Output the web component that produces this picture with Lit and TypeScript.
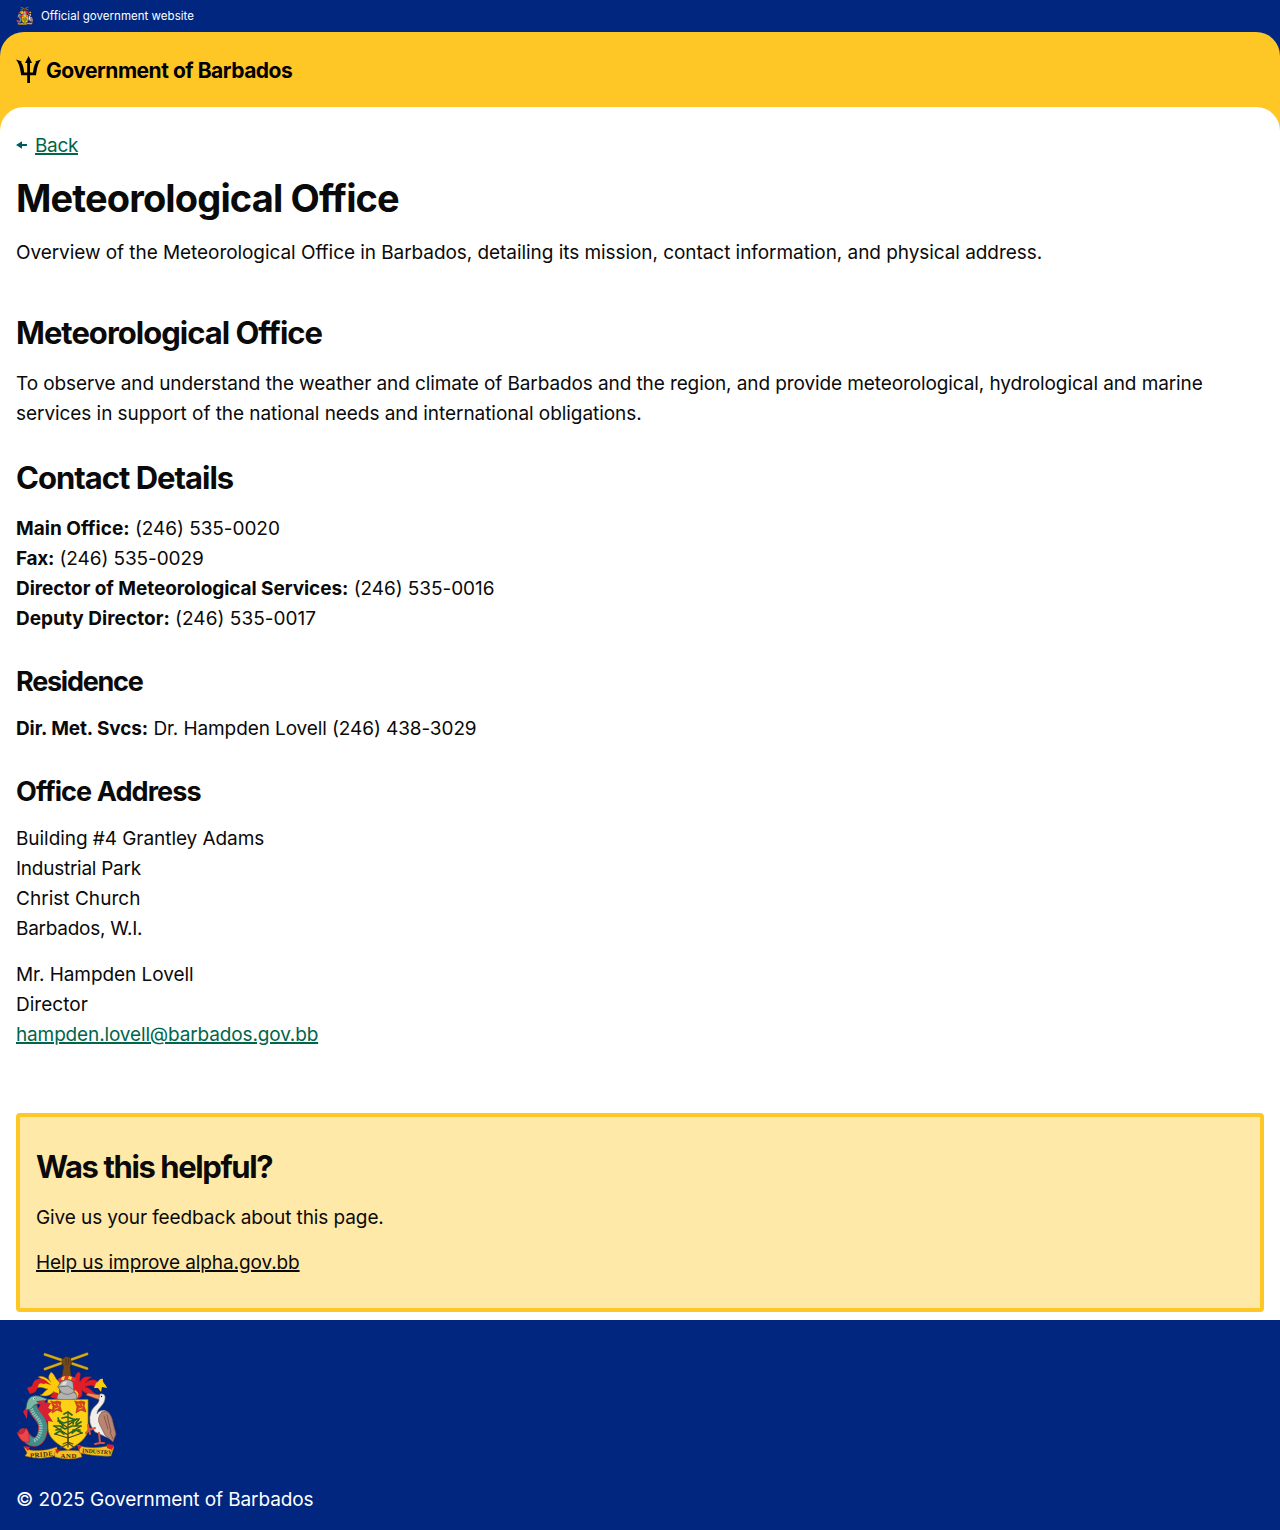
import { LitElement, html, css, svg } from "lit";
import { customElement } from "lit/decorators.js";

const arms = svg`
  <g stroke-linecap="round" stroke-linejoin="round">
    <path d="M29 2.500L71 16.5M29 17L71 2" stroke="#6f5a10" stroke-width="3.200" fill="none"/>
    <path d="M29 2.500L71 16.5M29 17L71 2" stroke="#d8ac1c" stroke-width="2.3" fill="none"/>
    <path d="M46.500 7L50 4.500L54 5.500L55.500 11L54 15L55.500 26H45.500L47.500 15L46 11Z" fill="#74481f" stroke="#3f2a1a" stroke-width=".7"/>
    <path d="M50 7V13M52.500 7V12" stroke="#3f2a1a" stroke-width=".6"/>
    <path d="M44 30C38 27 40 23 35 20C33 24 31 25 35 30C31 26 26 23 22 25C26 26 26 29 29 32L21 30L20 36C26 34 28 37 32 37C27 40 27 43 24 43C29 45 35 44 38 39C36 43 38 46 43 46Z" fill="#fccb0c" stroke="#a8640f" stroke-width=".4"/>
    <path d="M22 27C27 25 31 29 35 33C29 31 26 30 23 32L21 37C20 41 16 41 14 42L11 36L16 34C17 31 18 28 22 27Z" fill="#df1c24"/>
    <path d="M38 40L34 45L43 48L42 41Z" fill="#df1c24"/>
    <path d="M56 31C60 28 58 21 63 20C66 21 63 26 64 30C66 25 69 24 76 25C72 27 71 29 69 31C74 27 79 27 82 30L79 35C75 32 72 34 69 35C75 36 76 40 80 42C73 43 69 42 66 38C66 43 67 45 61 47L54 46Z" fill="#e11d27" stroke="#941921" stroke-width=".4"/>
    <path d="M80 31C83 30 83 26 87 27C86 31 90 32 91 36L86 35L85 40L82 36L78 36Z" fill="#fccb0c"/>
    <path d="M59 39Q64 42 59 47" stroke="#fccb0c" stroke-width="2" fill="none"/>
    <path d="M42 27Q50 21 60 26L59 30Q49 26 43 31Z" fill="#e3342d"/>
    <path d="M46 25L49 24L48 28L45 28ZM53 24L56 25L55 28L52 27Z" fill="#f8d22e"/>
    <path d="M45 30Q51 25 57 30L58 40Q62 43 61 47L50 48L41 47Q40 43 45 40L42 35Z" fill="#b2b2b1" stroke="#57595c" stroke-width=".7"/>
    <path d="M42 35L52 34L58 38M45 40Q51 45 58 40" stroke="#6f7173" stroke-width=".9" fill="none"/>
    <path d="M47 30L51 29L50 33L45 33Z" fill="#dedede"/>
    <path d="M32 47.500H72V76C72 86 63 92 52 98C41 92 32 86 32 76Z" fill="#fcd116" stroke="#a67a0d" stroke-width=".7"/>
    <g fill="#d9401f" stroke="#a12f18" stroke-width=".6">
      <path d="M35 49L38 50L41 49L45 50L44 54L46 60L41 58L36 61L37 55Z"/>
      <path d="M59 49L62 50L65 49L69 50L68 54L70 60L65 58L60 61L61 55Z"/>
    </g>
    <path d="M38 52L40 53M42 52L43 54M39 57L42 56M62 52L64 53M66 52L67 54M63 57L66 56" stroke="#f7b51b" stroke-width="1"/>
    <path d="M52 60V95M52 76L42 69M52 73L61 67M52 83L38 74M52 82L65 74M52 86L39 82M52 86L66 81" stroke="#3d461c" stroke-width="1.200" fill="none"/>
    <path d="M48 62L52 60L56 63M46 66L51 65L57 67M42 69L48 71L55 69L61 67M38 74L44 74L49 77L56 74L65 74M39 82L44 79L48 82M56 81L60 78L66 81M40 78L45 77M60 73L65 70M57 78L64 78M44 71L42 66M60 71L63 67M47 74L44 69M57 72L58 67" stroke="#2c6426" stroke-width="1.700" fill="none"/>
    <path d="M52 84V92L44 96M52 91L59 96M52 90L47 92M52 90L57 92" stroke="#57451b" stroke-width="1.200" fill="none"/>
    <path d="M26 50L35 51L32 56L37 58L32 62L37 70L28 68L22 57ZM12 53L7 60L11 67Z" fill="#d81f35"/>
    <path d="M16 52C17 63 27 65 27 75C27 83 24 90 18 90C13 90 11 86 7 81" stroke="#c82a3b" stroke-width="9.600" fill="none"/>
    <path d="M16 52C17 63 27 65 27 75C27 83 24 90 18 90C14 90 12 88 10 85" stroke="#438d88" stroke-width="8" fill="none" stroke-linecap="butt"/>
    <path d="M15 54C16 64 25 66 25 75C25 82 22 88 17 89" stroke="#93c7ba" stroke-width="3.400" fill="none" stroke-dasharray="1.400 1" stroke-linecap="butt"/>
    <path d="M11 51Q13 42 23 44L31 47L27 51L21 52Q18 52 15 57L10 58Z" fill="#79b8a5" stroke="#365d5c" stroke-width=".7"/>
    <path d="M20 49L30 48L24 53Z" fill="#c92735"/>
    <circle cx="18" cy="46.500" r="1.100" fill="#fff"/><circle cx="18.300" cy="46.500" r=".5" fill="#111"/>
    <path d="M13 90C8 91 4 89 1 80C5 84 8 82 10 76C13 79 13 83 13 86Z" fill="#ef4448" stroke="#9e2431" stroke-width=".6"/>
    <path d="M84 43L72 41L70 43L84 48Z" fill="#f28c5c" stroke="#8b432c" stroke-width=".6"/>
    <path d="M84 42Q90 41 89 47C88 54 81 56 81 62C84 57 91 57 94 63C98 69 98 81 97 88C92 86 86 83 79 80Q71 71 75 60C77 54 84 52 83 47Z" fill="#f1efec" stroke="#77706c" stroke-width=".6"/>
    <path d="M86 60Q93 57 96 67L100 82L97 90L89 83L84 73Q80 66 86 60Z" fill="#b98572" stroke="#6b483e" stroke-width=".6"/>
    <path d="M88 64L92 77M91 63L95 80M94 80L97 87" stroke="#7b5548" stroke-width=".9"/>
    <circle cx="85.500" cy="44.500" r=".7" fill="#151515"/>
    <path d="M83 81L84 91L79 92M84 91L88 91M79 76L73 78L72 73M74 77L70 81M73 77L74 82" stroke="#dc563a" stroke-width="2" fill="none"/>
    <g fill="#f7bd22" stroke="#96600c" stroke-width=".5">
      <path d="M8 95L14 98Q27 100 41 95L41 103Q26 109 9 104L11 101Z"/>
      <path d="M39 100Q48 97 64 99L66 105Q53 109 39 105Z"/>
      <path d="M62 93L68 95Q80 97 92 94L98 95L95 104Q80 105 64 101Z"/>
    </g>
    <path d="M8 94L14 95L12 99ZM39 97L44 98L41 102ZM61 93L66 94L63 98ZM91 92L98 93L96 98L91 96Z" fill="#dc2027"/>
    <g font-family="Liberation Serif,serif" font-weight="700" fill="#3b2c08">
      <text x="14" y="105" font-size="6.800" textLength="23" transform="rotate(-5 25 104)">PRIDE</text>
      <text x="44.500" y="105.500" font-size="6.800" textLength="16">AND</text>
      <text x="66" y="101.500" font-size="5.800" transform="rotate(4 80 101)">INDUSTRY</text>
    </g>
  </g>`;

@customElement("app-root")
export class AppRoot extends LitElement {
  static styles = css`
    :host { display: block; font: 400 19px/30px Inter, "Liberation Sans", sans-serif; letter-spacing: -.06px; color: #0a0a0a; background: #fff; }
    * { box-sizing: border-box; }
    h1, h2, h3, p { margin: 0; }
    b { font-weight: 700; }
    svg { flex: none; overflow: visible; letter-spacing: 0; }
    .official { height: 32px; padding: 0 16px; display: flex; align-items: center; gap: 8px; color: #fff; background: #00267f; font-size: 11.5px; line-height: 16px; letter-spacing: .03px; }
    .official svg { width: 17px; height: 18px; }
    .navy { background: #00267f; }
    .brand { height: 99px; padding: 24px 16px 0; background: #ffc726; border-radius: 24px 24px 0 0; }
    .logo { display: flex; align-items: center; gap: 5px; height: 27px; color: #000; font-size: 21px; font-weight: 700; letter-spacing: -.48px; }
    .logo svg { width: 25px; height: 27px; }
    .logo span { padding-top: 2px; }
    .main { margin-top: -24px; padding: 24px 16px 8px; border-radius: 24px 24px 0 0; background: #fff; }
    .back { display: flex; align-items: center; gap: 8px; height: 30px; letter-spacing: -.35px; }
    .back svg { width: 11px; height: 10px; margin-bottom: 2px; }
    a { color: #00654a; text-decoration: underline; text-decoration-thickness: 2px; text-underline-offset: 1px; }
    h1 { font-size: 38px; line-height: 46px; margin: 14px 0 17px; font-weight: 700; letter-spacing: -.86px; }
    h2 { font-size: 31px; line-height: 37px; margin: 30px 0 18px; font-weight: 700; letter-spacing: -1px; }
    h3 { font-size: 27px; line-height: 32px; margin: 32px 0 16px; font-weight: 700; letter-spacing: -.9px; }
    .first { margin-top: 46px; }
    .person { margin-top: 16px; }
    .tight { letter-spacing: -.1px; }
    .tighter { letter-spacing: -.26px; }
    .snug { letter-spacing: -1.25px; }
    .loose { letter-spacing: .03px; }
    .person a { letter-spacing: -.14px; }
    .feedback { margin-top: 63px; height: 199px; padding: 31px 16px; border: 4px solid #ffc726; border-radius: 4px; background: #ffe9a8; }
    .feedback h2 { margin-top: 0; letter-spacing: -1.4px; }
    .feedback p + p { margin-top: 15px; }
    .feedback a { color: #0a0a0a; letter-spacing: -.1px; }
    .footer { height: 210px; padding: 32px 16px 15px; display: flex; flex-direction: column; gap: 25px; color: #fff; background: #00267f; }
    .footer svg { width: 100px; height: 108px; }
  `;

  render() {
    return html`
      <div class="official"><svg viewBox="0 0 100 108">${arms}</svg><span>Official government website</span></div>
      <div class="navy"><header class="brand"><div class="logo">
        <svg viewBox="0 0 25 27"><path d="M0 3.500L5.800 5.500L5.200 6.500C7.200 9 7.700 12.500 8.200 16.500H11.200V7H9L12.600 0L16 7H14V16.500H17C17.500 12.500 18 9 20 6.500L19.400 5.500L25 3.500C21.500 8 21 13 20 19.300H14V27H11.200V19.300H5.200C4.200 13 3.500 8 0 3.500Z"/></svg>
        <span>Government of Barbados</span></div></header></div>
      <main class="main">
        <div class="back"><svg viewBox="0 0 11 10"><path d="M0 5L6 1.200V4H11V6H6V8.800Z" fill="#005b5e"/></svg><a>Back</a></div>
        <h1>Meteorological Office</h1>
        <p>Overview of the Meteorological Office in Barbados, detailing its mission, contact information, and physical address.</p>
        <h2 class="first">Meteorological Office</h2>
        <p><span class="tight">To observe and understand the weather and climate of Barbados and the region, and provide meteorological, hydrological and marine</span><br>services in support of the national needs and international obligations.</p>
        <h2>Contact Details</h2>
        <p><b class="loose">Main Office:</b> (246) 535-0020<br><b class="tighter">Fax:</b> <span class="tight">(246) 535-0029</span><br><b>Director of Meteorological Services:</b> (246) 535-0016<br><b class="loose">Deputy Director:</b> <span class="loose">(246) 535-0017</span></p>
        <h3 class="snug">Residence</h3>
        <p><b class="tight">Dir. Met. Svcs:</b> <span class="tight">Dr. Hampden Lovell (246) 438-3029</span></p>
        <h3>Office Address</h3>
        <p><span>Building #4 Grantley Adams</span><br><span class="tighter">Industrial Park</span><br><span class="loose">Christ Church</span><br><span class="tighter">Barbados, W.I.</span></p>
        <p class="person">Mr. Hampden Lovell<br><span class="loose">Director</span><br><a>hampden.lovell@barbados.gov.bb</a></p>
        <section class="feedback"><h2>Was this helpful?</h2><p class="tight">Give us your feedback about this page.</p><p><a>Help us improve alpha.gov.bb</a></p></section>
      </main>
      <footer class="footer"><svg viewBox="0 0 100 108">${arms}</svg><p class="tight">© 2025 Government of Barbados</p></footer>
    `;
  }
}
